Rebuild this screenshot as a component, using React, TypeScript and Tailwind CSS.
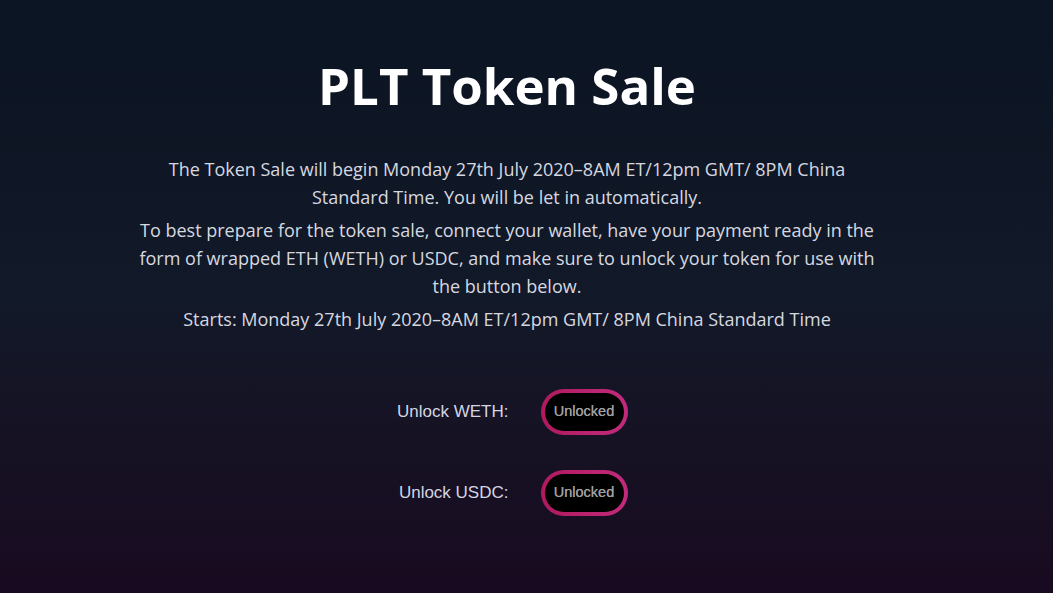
export default function App() {
  const rows = [
    { label: "Unlock WETH:", state: "Unlocked" },
    { label: "Unlock USDC:", state: "Unlocked" },
  ];

  return (
    <div className="min-h-[593px] w-full bg-gradient-to-b from-[#0b1422] via-[#121928] to-[#180a20] pr-[39px]">
      <main className="mx-auto flex max-w-[760px] flex-col items-center pt-[53px] text-center font-['Open_Sans',sans-serif]">
        <h1 className="text-[51px] font-bold leading-[64px] text-white">PLT Token Sale</h1>

        <div className="mt-[38px] max-w-[748px] text-[18px] leading-[28px] text-[#d6d8e0]">
          <p className="mx-auto max-w-[700px]">
            The Token Sale will begin Monday 27th July 2020–8AM ET/12pm GMT/ 8PM China Standard Time. You will be let
            in automatically.
          </p>
          <p className="mt-[5px]">
            To best prepare for the token sale, connect your wallet, have your payment ready in the form of wrapped ETH
            (WETH) or USDC, and make sure to unlock your token for use with the button below.
          </p>
          <p className="mt-[5px]">Starts: Monday 27th July 2020–8AM ET/12pm GMT/ 8PM China Standard Time</p>
        </div>

        {/* unlock buttons */}
        <div className="ml-[10px] mt-[56px] flex flex-col gap-[35px] font-['Liberation_Sans',Arial,sans-serif]">
          {rows.map((r) => (
            <div key={r.label} className="flex items-center gap-[32px]">
              <span className="w-[112px] text-right text-[17px] text-[#d4d6e2]">{r.label}</span>
              <div className="rounded-full bg-gradient-to-r from-[#b0195f] to-[#c22a7c] p-[4px]">
                <button className="h-[38px] w-[79px] rounded-full bg-black text-[14.5px] text-[#a0a0a0] [text-shadow:0_0_0.4px_#a0a0a0]">
                  {r.state}
                </button>
              </div>
            </div>
          ))}
        </div>
      </main>
    </div>
  );
}
